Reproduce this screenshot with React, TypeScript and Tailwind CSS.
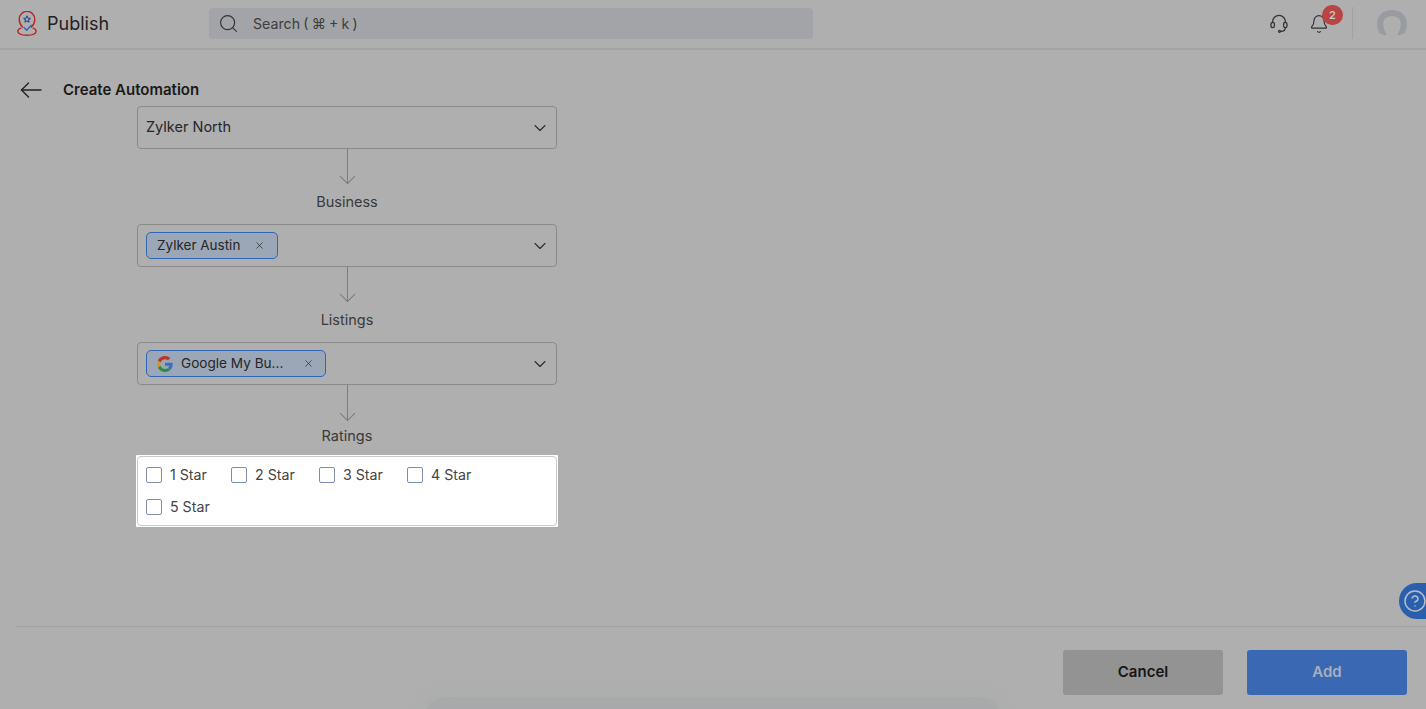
import React from 'react';
import { ChevronDown, Search, X, Bell, CircleHelp } from 'lucide-react';

const Connector: React.FC<{ label: string; height?: string; labelGap?: string }> = ({
  label,
  height = 'h-[34px]',
  labelGap = 'mt-[10px]',
}) => (
  <div className="flex flex-col items-center">
    <div className={`relative w-px bg-[#7c7c7c] ${height}`}>
      <div className="absolute bottom-[1px] left-[-5px] w-[11px] h-[11px] border-r border-b border-[#7c7c7c] rotate-45" />
    </div>
    <div className={`${labelGap} h-[18px] leading-[18px] text-[14.5px] text-[#3a3a3a]`}>{label}</div>
  </div>
);

const SelectBox: React.FC<{ children: React.ReactNode }> = ({ children }) => (
  <div className="h-[43px] rounded-[4px] border border-[#8a8a8a] flex items-center justify-between pl-[8px] pr-[6px]">
    {children}
    <ChevronDown size={20} strokeWidth={1.3} className="text-[#2b2b2b]" />
  </div>
);

const Tag: React.FC<{ children: React.ReactNode; width: string; gap: string }> = ({ children, width, gap }) => (
  <div className={`h-[27px] rounded-[5px] border border-[#2f66b8] bg-[#9ba6b6] flex items-center pl-[10px] ${width} ${gap}`}>
    {children}
    <X size={11} strokeWidth={1.6} className="text-[#2b2b2b]" />
  </div>
);

const Check: React.FC<{ label: string; width: string }> = ({ label, width }) => (
  <label className={`flex items-center gap-[8px] h-[16px] ${width}`}>
    <span className="w-[16px] h-[16px] rounded-[2px] border border-[#7d8db5] bg-white shrink-0" />
    <span className="text-[14.2px] text-[#444444] leading-none whitespace-nowrap">{label}</span>
  </label>
);

const GoogleIcon = () => (
  <svg viewBox="0 0 48 48" className="w-[16px] h-[16px] shrink-0">
    <path fill="#b8352a" d="M24 9.500c3.500 0 6.600 1.200 9.100 3.600l6.800-6.800C35.800 2.500 30.300 0 24 0 14.600 0 6.500 5.400 2.600 13.200l7.900 6.100C12.400 13.700 17.700 9.500 24 9.500z" />
    <path fill="#3a6fc4" d="M47 24.500c0-1.600-.1-3.100-.4-4.500H24v9h12.900c-.6 3-2.200 5.500-4.700 7.200l7.600 5.900C44.200 37.900 47 31.800 47 24.500z" />
    <path fill="#d09a1c" d="M10.500 28.700c-.5-1.500-.8-3-.8-4.700s.3-3.200.8-4.700l-7.900-6.100C.9 16.500 0 20.100 0 24s.9 7.500 2.600 10.800l7.900-6.100z" />
    <path fill="#2f8a45" d="M24 48c6.300 0 11.700-2.100 15.800-5.700l-7.600-5.900c-2.100 1.400-4.900 2.300-8.200 2.300-6.300 0-11.600-4.200-13.500-9.800l-7.900 6.100C6.500 42.600 14.600 48 24 48z" />
  </svg>
);

const PublishLogo = () => (
  <svg viewBox="0 0 22 25" className="w-[22px] h-[25px]" fill="none">
    <path d="M6.500 16C4.500 14 3.200 11.200 3.200 8.200a7.800 7.800 0 0 1 15.600 0c0 3-1.300 5.800-3.300 7.800" stroke="#b5262a" strokeWidth="1.400" strokeLinecap="round" />
    <path d="M4.800 17.200C3 17.800 1.700 18.900 1.900 20.500c.3 2.300 3.600 3.700 9.100 3.700s8.800-1.400 9.100-3.700c.2-1.600-1.100-2.700-2.900-3.300" stroke="#b5262a" strokeWidth="1.400" strokeLinecap="round" />
    <path d="M11 5l1 2 2.200.3-1.600 1.500.4 2.200-2-1-2 1 .4-2.200-1.600-1.500L10 7z" stroke="#2c4f8f" strokeWidth="1.200" strokeLinejoin="round" />
    <path d="M8 16.500l2.700 2.700 4.600-5" stroke="#2f66b8" strokeWidth="1.300" strokeLinecap="round" strokeLinejoin="round" />
  </svg>
);

const HeadsetIcon = () => (
  <svg viewBox="0 0 18 19" className="w-[18px] h-[19px]" fill="none" stroke="#333333" strokeWidth="1.300" strokeLinecap="round" strokeLinejoin="round">
    <path d="M2.600 8.500V7.800a6.400 6.400 0 0 1 12.800 0v.7" />
    <rect x="1" y="8.300" width="3.400" height="5.400" rx="1.700" />
    <rect x="13.600" y="8.300" width="3.400" height="5.400" rx="1.700" />
    <path d="M15.300 13.700c0 2.300-1.800 3.600-4.300 3.600" />
    <circle cx="9.500" cy="17.300" r="1" />
  </svg>
);

const BackArrow = () => (
  <svg viewBox="0 0 22 16" className="w-[22px] h-[16px]" fill="none" stroke="#222222" strokeWidth="1.400" strokeLinecap="round" strokeLinejoin="round">
    <path d="M21 8H1.500" />
    <path d="M8.500 1L1.500 8l7 7" />
  </svg>
);

const Avatar = () => (
  <svg viewBox="0 0 30 26" className="w-[30px] h-[26px]">
    <path fill="#989ca0" d="M15 0C6.700 0 0 5.200 0 13.500c0 3.400 1 7 2.500 9.500 1.500 1.300 4.500 2.200 6.500 2.500 0 0 .5-1.500.2-2.300C7.500 21.200 6.300 17.500 6.300 13.500 6.300 8.700 10 6.300 15 6.300s8.700 2.400 8.700 7.200c0 4-1.200 7.700-2.900 9.700-.3.800.2 2.300.2 2.300 2-.3 5-1.200 6.500-2.500 1.500-2.500 2.500-6.100 2.500-9.500C30 5.200 23.300 0 15 0z" />
  </svg>
);

export default function App() {
  return (
    <div
      className="relative w-full h-[709px] overflow-hidden flex flex-col bg-[#afafaf] text-[#1c1c1c]"
      style={{ fontFamily: 'Inter, "Noto Sans", sans-serif' }}
    >
      {/* top bar */}
      <header className="h-[50px] shrink-0 border-b-2 border-[#a3a3a3] flex items-center pl-[16px] pr-[19px] pb-[2px]">
        <div className="flex items-center w-[193px]">
          <PublishLogo />
          <span className="ml-[9px] text-[18px] leading-none text-[#222222] translate-y-[1px]">Publish</span>
        </div>
        <div className="w-[604px] h-[31px] rounded-[4px] bg-[#a2a4a7] flex items-center pl-[9px] gap-[14px]">
          <Search size={21} strokeWidth={1.3} className="text-[#333333]" />
          <span className="text-[14.2px] text-[#3d3d3d] [word-spacing:-0.8px] translate-y-[1px]">Search ( ⌘ + k )</span>
        </div>
        <div className="ml-auto flex items-center">
          <HeadsetIcon />
          <div className="relative ml-[21px] mr-[23px] translate-y-[1px]">
            <Bell size={20} strokeWidth={1.4} className="text-[#333333]" />
            <span className="absolute left-[13px] top-[-9px] w-[21px] h-[20px] rounded-full bg-[#b84444] text-[11px] font-semibold leading-[20px] text-center text-[#c9c9c9]">
              2
            </span>
          </div>
          <div className="w-px h-[32px] bg-[#a2a2a2] mr-[24px]" />
          <Avatar />
        </div>
      </header>

      {/* page title */}
      <div className="h-[56px] shrink-0 flex items-end pl-[20px] pb-[5px]">
        <div className="h-[22px] flex items-center">
          <BackArrow />
        </div>
        <h1 className="ml-[21px] text-[15px] leading-[22px] font-semibold text-[#1a1a1a]">Create Automation</h1>
      </div>

      {/* automation flow */}
      <div className="ml-[137px] w-[420px] flex-1 text-[14px]">
        <SelectBox>
          <span className="text-[14.5px] text-[#262626] -translate-y-[1px]">Zylker North</span>
        </SelectBox>
        <Connector label="Business" />
        <div className="mt-[13px]">
          <SelectBox>
            <Tag width="w-[132px]" gap="gap-[14px]">
              <span className="text-[13.5px] text-[#262626] whitespace-nowrap">Zylker Austin</span>
            </Tag>
          </SelectBox>
        </div>
        <Connector label="Listings" />
        <div className="mt-[13px]">
          <SelectBox>
            <Tag width="w-[180px]" gap="gap-[8px]">
              <GoogleIcon />
              <span className="text-[13.6px] text-[#262626] whitespace-nowrap w-[114px]">Google My Bu...</span>
            </Tag>
          </SelectBox>
        </div>
        <Connector label="Ratings" height="h-[35px]" labelGap="mt-[7px]" />
        <div className="mt-[10px] -mx-px w-[422px] h-[72px] bg-white rounded-[1px] p-[1px]">
          <div className="h-full rounded-[4px] border border-[#c9c9c9] pl-[8px] pt-[10px] flex flex-col gap-[16px]">
            <div className="flex">
              <Check label="1 Star" width="w-[85px]" />
              <Check label="2 Star" width="w-[88px]" />
              <Check label="3 Star" width="w-[88px]" />
              <Check label="4 Star" width="w-[88px]" />
            </div>
            <Check label="5 Star" width="w-[85px]" />
          </div>
        </div>
      </div>

      {/* footer actions */}
      <footer className="ml-[15px] h-[83px] shrink-0 border-t border-[#a2a2a2] flex justify-end items-start gap-[24px] pt-[23px] pr-[19px]">
        <button className="w-[160px] h-[45px] rounded-[3px] bg-[#939393] text-[15px] font-semibold text-[#161616]">Cancel</button>
        <button className="w-[160px] h-[45px] rounded-[3px] bg-[#3a68b3] text-[15px] font-semibold text-[#a9b0bb]">Add</button>
      </footer>

      {/* help tab */}
      <div className="absolute left-[1399px] top-[583px] w-[27px] h-[36px] rounded-l-[18px] bg-[#2a5fae] flex items-center pl-[4px]">
        <CircleHelp size={24} strokeWidth={1.5} className="text-[#b7bec9] shrink-0" />
      </div>

      {/* shadow peeking in at the bottom edge */}
      <div className="absolute left-[425px] right-[426px] bottom-[-30px] h-[42px] rounded-t-[20px] bg-[#a8a9aa] shadow-[0_0_16px_6px_#acadad]" />
    </div>
  );
}
